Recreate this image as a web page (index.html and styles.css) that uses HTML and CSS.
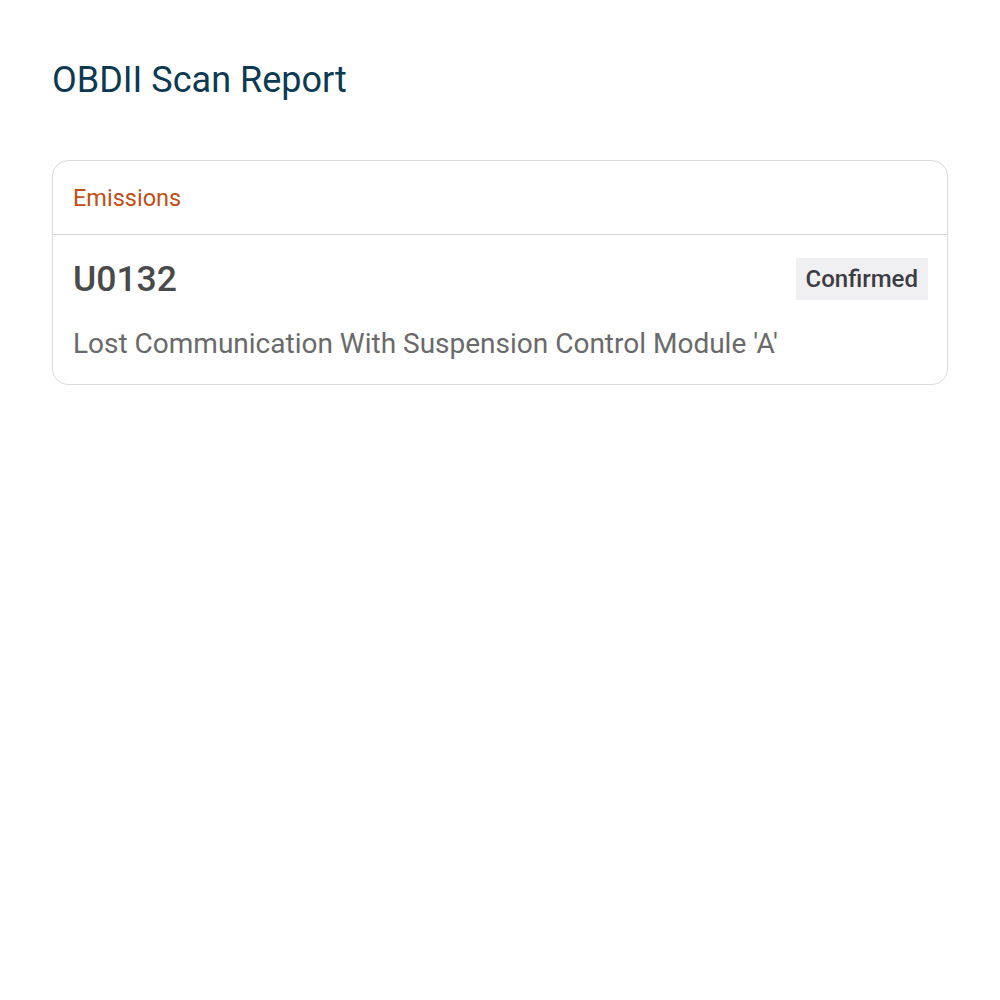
FILE: index.html
```html
<!DOCTYPE html>
<html lang="en-US">
<head>
     <meta charset="UTF-8">
     <meta name="viewport" content="width=device-width, initial-scale=1.0">
     <title>OBDII Scan Report</title>
     <link rel="stylesheet" href="styles.css">
</head>
<body>
     <div class="page">
          <h1 class="title">OBDII Scan Report</h1>
          <div class="card">
               <div class="card-head">Emissions</div>
               <div class="card-body">
                    <div class="code-row">
                         <span class="code">U0132</span>
                         <span class="badge">Confirmed</span>
                    </div>
                    <div class="desc">Lost Communication With Suspension Control Module 'A'</div>
               </div>
          </div>
     </div>
</body>
</html>
```

FILE: styles.css
```css
body {
     margin: 0;
     background: #fff;
     font-family: Roboto, "Liberation Sans", sans-serif;
}

.page {
     padding: 52px;
}

.title {
     margin: 6px 0 58px;
     font-size: 36px;
     font-weight: 400;
     line-height: 44px;
     color: #0d3a52;
}

.card {
     border: 1px solid #dcdcdc;
     border-radius: 16px;
}

.card-head {
     height: 73px;
     display: flex;
     align-items: center;
     padding: 0 20px;
     font-size: 23.5px;
     color: #c24e16;
     border-bottom: 1px solid #d6d6d6;
}

.card-body {
     padding: 23px 19px 22px 20px;
}

.code-row {
     display: flex;
     justify-content: space-between;
     align-items: center;
}

.code {
     font-size: 35.5px;
     font-weight: 500;
     color: #4a4a4a;
}

.badge {
     background: #f0f0f3;
     padding: 0 10px;
     height: 42px;
     line-height: 42px;
     font-size: 24px;
     font-weight: 500;
     color: #3c3c43;
}

.desc {
     margin-top: 26px;
     font-size: 28px;
     line-height: 36px;
     color: #6a6a6a;
}
```
